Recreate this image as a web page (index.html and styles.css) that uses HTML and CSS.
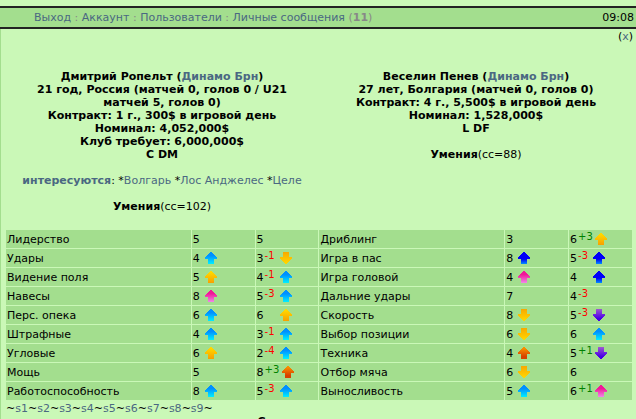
FILE: index.html
```html
<!DOCTYPE html>
<html lang="ru">
<head>
<meta charset="utf-8">
<title>Сравнение игроков</title>
<link rel="stylesheet" href="styles.css">
</head>
<body>
<svg class="defs" aria-hidden="true">
  <defs>
    <linearGradient id="sky" x2="0" y2="1"><stop offset=".3" stop-color="#0090ff"/><stop offset="1" stop-color="#00f0ff"/></linearGradient>
    <linearGradient id="gold" x2="0" y2="1"><stop offset=".1" stop-color="#ffd800"/><stop offset="1" stop-color="#f8a000"/></linearGradient>
    <linearGradient id="goldDown" x2="0" y2="1"><stop offset="0" stop-color="#f8a800"/><stop offset="1" stop-color="#ffd800"/></linearGradient>
    <linearGradient id="pink" x2="0" y2="1"><stop offset=".3" stop-color="#f01898"/><stop offset="1" stop-color="#f088e8"/></linearGradient>
    <linearGradient id="blue" x2="0" y2="1"><stop offset=".6" stop-color="#0000f8"/><stop offset="1" stop-color="#0090ff"/></linearGradient>
    <linearGradient id="rust" x2="0" y2="1"><stop offset=".1" stop-color="#f89000"/><stop offset=".8" stop-color="#d84000"/></linearGradient>
    <linearGradient id="violet" x2="0" y2="1"><stop offset="0" stop-color="#a058d0"/><stop offset=".8" stop-color="#4800e8"/></linearGradient>
    <path id="up" d="M5 0h2v1h1v1h1v1h1v1h1v1h1v2h-3v5h-6v-5h-3v-2h1v-1h1v-1h1v-1h1v-1h1z"/>
    <path id="down" d="M3 0h6v5h3v2h-1v1h-1v1h-1v1h-1v1h-1v1h-2v-1h-1v-1h-1v-1h-1v-1h-1v-1h-1v-2h3z"/>
  </defs>
</svg>
<nav class="bar">
  <div class="menu"><a href="#">Выход</a> : <a href="#">Аккаунт</a> : <a href="#">Пользователи</a> : <a href="#">Личные сообщения</a> (<b>11</b>)</div>
  <time class="clock">09:08</time>
</nav>
<main class="content">
  <div class="close">(<a href="#">x</a>)</div>
  <div class="players">
    <section class="player">
      <b>Дмитрий Ропельт (<a href="#">Динамо Брн</a>)<br>
      21 год, Россия (матчей 0, голов 0 / U21 матчей 5, голов 0)<br>
      Контракт: 1 г., 300$ в игровой день<br>
      Номинал: 4,052,000$<br>
      Клуб требует: 6,000,000$<br>
      C DM</b><br><br>
      <a href="#"><b>интересуются</b></a>: *<a href="#">Волгарь</a> *<a href="#">Лос Анджелес</a> *<a href="#">Целе</a><br><br>
      <b>Умения</b>(сс=102)
    </section>
    <section class="player">
      <b>Веселин Пенев (<a href="#">Динамо Брн</a>)<br>
      27 лет, Болгария (матчей 0, голов 0)<br>
      Контракт: 4 г., 5,500$ в игровой день<br>
      Номинал: 1,528,000$<br>
      L DF</b><br><br>
      <b>Умения</b>(сс=88)
    </section>
  </div>
  <table class="skills"><tbody id="skills"></tbody></table>
  <div class="seasons">~<a href="#">s1</a>~<a href="#">s2</a>~<a href="#">s3</a>~<a href="#">s4</a>~<a href="#">s5</a>~<a href="#">s6</a>~<a href="#">s7</a>~<a href="#">s8</a>~<a href="#">s9</a>~</div>
  <div class="caption"><b>Сравнение игроков</b></div>
</main>
<script src="skills.js"></script>
</body>
</html>
```
FILE: styles.css
```css
html { scrollbar-width: none; }
body {
  margin: 0;
  padding-top: 6px;
  background: #caf8b7;
  color: #000;
  font: 11px/13px Verdana, "DejaVu Sans", sans-serif;
}
a { color: #4a6882; text-decoration: none; }
.defs { position: absolute; width: 0; height: 0; }
.bar {
  display: flex;
  justify-content: space-between;
  align-items: center;
  height: 19px;
  padding: 0 2px 0 34px;
  border: solid #222;
  border-width: 2px 0;
  background: #a3de8e;
}
.menu { color: #888; }
.content {
  padding: 1px 3px 0 4px;
  border-left: 1px solid #a3de8e;
}
.close { text-align: right; }
.players {
  display: grid;
  grid-template-columns: 1fr 1fr;
  padding: 27px 0 16px;
  text-align: center;
}
.player { padding: 0 10px; }
.skills {
  width: 100%;
  table-layout: fixed;
  border-spacing: 1px;
}
.skills td {
  width: 10%;
  height: 18px;
  padding: 0 1px;
  background: #a3de8e;
  white-space: nowrap;
}
.skills .name { width: 30%; }
.value { display: flex; align-items: center; }
.digit { width: 8px; }
.value svg { width: 12px; height: 12px; margin-left: 4px; }
.diff {
  width: 11px;
  height: 18px;
  font-size: 10px;
  line-height: 14px;
}
.minus { color: #f00; }
.plus { width: 13px; color: #008000; }
.seasons { padding: 1px 1px 0; }
.caption { text-align: center; }
```
FILE: skills.js
```js
const rows = [
  ["Лидерство", "5", "", "5", "", "", "Дриблинг", "3", "", "6", "+3", "gold"],
  ["Удары", "4", "sky", "3", "-1", "goldDown", "Игра в пас", "8", "blue", "5", "-3", "blue"],
  ["Видение поля", "5", "gold", "4", "-1", "sky", "Игра головой", "4", "pink", "4", "", "blue"],
  ["Навесы", "8", "pink", "5", "-3", "sky", "Дальние удары", "7", "", "4", "-3", ""],
  ["Перс. опека", "6", "sky", "6", "", "gold", "Скорость", "8", "goldDown", "5", "-3", "violet"],
  ["Штрафные", "4", "sky", "3", "-1", "sky", "Выбор позиции", "6", "goldDown", "6", "", "sky"],
  ["Угловые", "6", "gold", "2", "-4", "sky", "Техника", "4", "rust", "5", "+1", "violet"],
  ["Мощь", "5", "", "8", "+3", "rust", "Отбор мяча", "6", "goldDown", "6", "", ""],
  ["Работоспособность", "8", "sky", "5", "-3", "sky", "Выносливость", "5", "sky", "6", "+1", "pink"]
];
const arrow = c => c
  ? `<svg viewBox="0 0 12 12" fill="url(#${c})"><use href="#${c === "goldDown" || c === "violet" ? "down" : "up"}"/></svg>`
  : "";
const diff = d => `<span class="diff ${d[0] === "+" ? "plus" : "minus"}">${d}</span>`;
const half = ([name, v1, a1, v2, d, a2]) =>
  `<td class="name">${name}</td>` +
  `<td><div class="value"><span class="digit">${v1}</span>${arrow(a1)}</div></td>` +
  `<td><div class="value"><span class="digit">${v2}</span>${diff(d)}${arrow(a2)}</div></td>`;
document.getElementById("skills").innerHTML =
  rows.map(r => `<tr>${half(r.slice(0, 6))}${half(r.slice(6))}</tr>`).join("");
```
